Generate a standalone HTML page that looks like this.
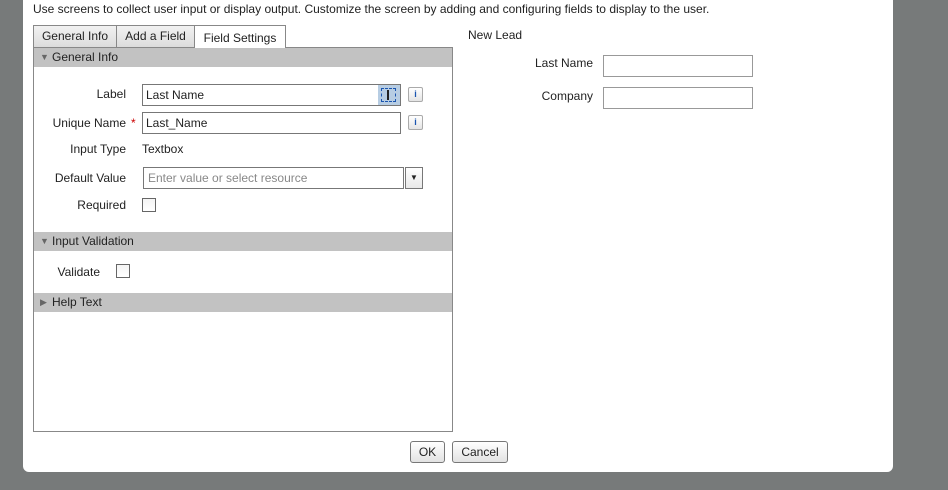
<!DOCTYPE html>
<html><head><style>
*{box-sizing:border-box;margin:0;padding:0}
body{width:948px;height:490px;background:#777a7a;font-family:"Liberation Sans",sans-serif;font-size:12px;color:#222;position:relative;overflow:hidden}
.abs{position:absolute}
.panel{left:23px;top:0;width:870px;height:472px;background:#fff;border-radius:0 0 6px 6px}
.tab{position:absolute;top:25px;height:22px;background:linear-gradient(#f2f2f2,#dcdcdc);border:1px solid #888;border-bottom:none;text-align:center;line-height:21px;font-size:12px}
.box{left:33px;top:47px;width:420px;height:385px;border:1px solid #888}
.hdr{position:absolute;left:34px;width:418px;height:19px;background:#c2c2c2;line-height:19px;padding-left:18px;font-size:12px}
.hdr i{position:absolute;left:6px;top:0;font-style:normal;font-size:9px;color:#666}
.lbl{position:absolute;text-align:right;font-size:12px}
.inp{position:absolute;height:22px;border:1px solid #777;background:#fff;padding-left:3px;line-height:20px;font-size:12px}
.ib{position:absolute;width:15px;height:15px;border:1px solid #aaa;border-radius:2px;background:linear-gradient(#fff,#e4e4e4);color:#1a55b0;font-size:9px;font-weight:bold;text-align:center;line-height:13px}
.cb{position:absolute;width:14px;height:14px;border:1px solid #666;background:linear-gradient(#f4f4f4,#fff)}
.btn{position:absolute;top:441px;height:22px;border:1px solid #777;border-radius:3px;background:linear-gradient(#fff,#e2e2e2);text-align:center;line-height:20px;font-size:12px}
</style></head><body>
<div class="abs panel"></div>
<div class="abs" style="left:33px;top:2px;font-size:12px">Use screens to collect user input or display output. Customize the screen by adding and configuring fields to display to the user.</div>
<div class="tab" style="left:33px;width:84px">General Info</div>
<div class="tab" style="left:116px;width:79px">Add a Field</div>
<div class="tab" style="left:194px;width:92px;height:23px;background:#fff;line-height:24px">Field Settings</div>
<div class="abs box"></div>
<div class="abs" style="left:195px;top:46px;width:90px;height:2px;background:#fff"></div>
<div class="hdr" style="top:48px"><i>▼</i>General Info</div>
<div class="lbl" style="left:40px;width:86px;top:87px">Label</div>
<div class="inp" style="left:142px;top:84px;width:259px">Last Name</div>
<div class="abs" style="left:378px;top:85px;width:22px;height:20px;background:#b7cde3"></div>
<div class="abs" style="left:381px;top:88px;width:15px;height:14px;border:1px dashed #1a55b0"></div>
<div class="abs" style="left:387px;top:90px;width:2px;height:10px;background:#222"></div>
<div class="ib" style="left:408px;top:87px">i</div>
<div class="lbl" style="left:40px;width:86px;top:116px">Unique Name</div>
<div class="abs" style="left:131px;top:116px;color:#c00;font-size:12px">*</div>
<div class="inp" style="left:142px;top:112px;width:259px">Last_Name</div>
<div class="ib" style="left:408px;top:115px">i</div>
<div class="lbl" style="left:40px;width:86px;top:142px">Input Type</div>
<div class="abs" style="left:142px;top:142px">Textbox</div>
<div class="lbl" style="left:40px;width:86px;top:171px">Default Value</div>
<div class="inp" style="left:143px;top:167px;width:261px;color:#888;padding-left:4px">Enter value or select resource</div>
<div class="abs" style="left:405px;top:167px;width:18px;height:22px;border:1px solid #777;background:linear-gradient(#fff,#e8e8e8);text-align:center;font-size:8px;line-height:20px">▼</div>
<div class="lbl" style="left:40px;width:86px;top:198px">Required</div>
<div class="cb" style="left:142px;top:198px"></div>
<div class="hdr" style="top:232px"><i>▼</i>Input Validation</div>
<div class="lbl" style="left:40px;width:60px;top:265px">Validate</div>
<div class="cb" style="left:116px;top:264px"></div>
<div class="hdr" style="top:293px"><i>▶</i>Help Text</div>
<div class="abs" style="left:468px;top:28px">New Lead</div>
<div class="lbl" style="left:500px;width:93px;top:56px">Last Name</div>
<div class="inp" style="left:603px;top:55px;width:150px;border-color:#999"></div>
<div class="lbl" style="left:500px;width:93px;top:89px">Company</div>
<div class="inp" style="left:603px;top:87px;width:150px;border-color:#999"></div>
<div class="btn" style="left:410px;width:35px">OK</div>
<div class="btn" style="left:452px;width:56px">Cancel</div>
</body></html>
